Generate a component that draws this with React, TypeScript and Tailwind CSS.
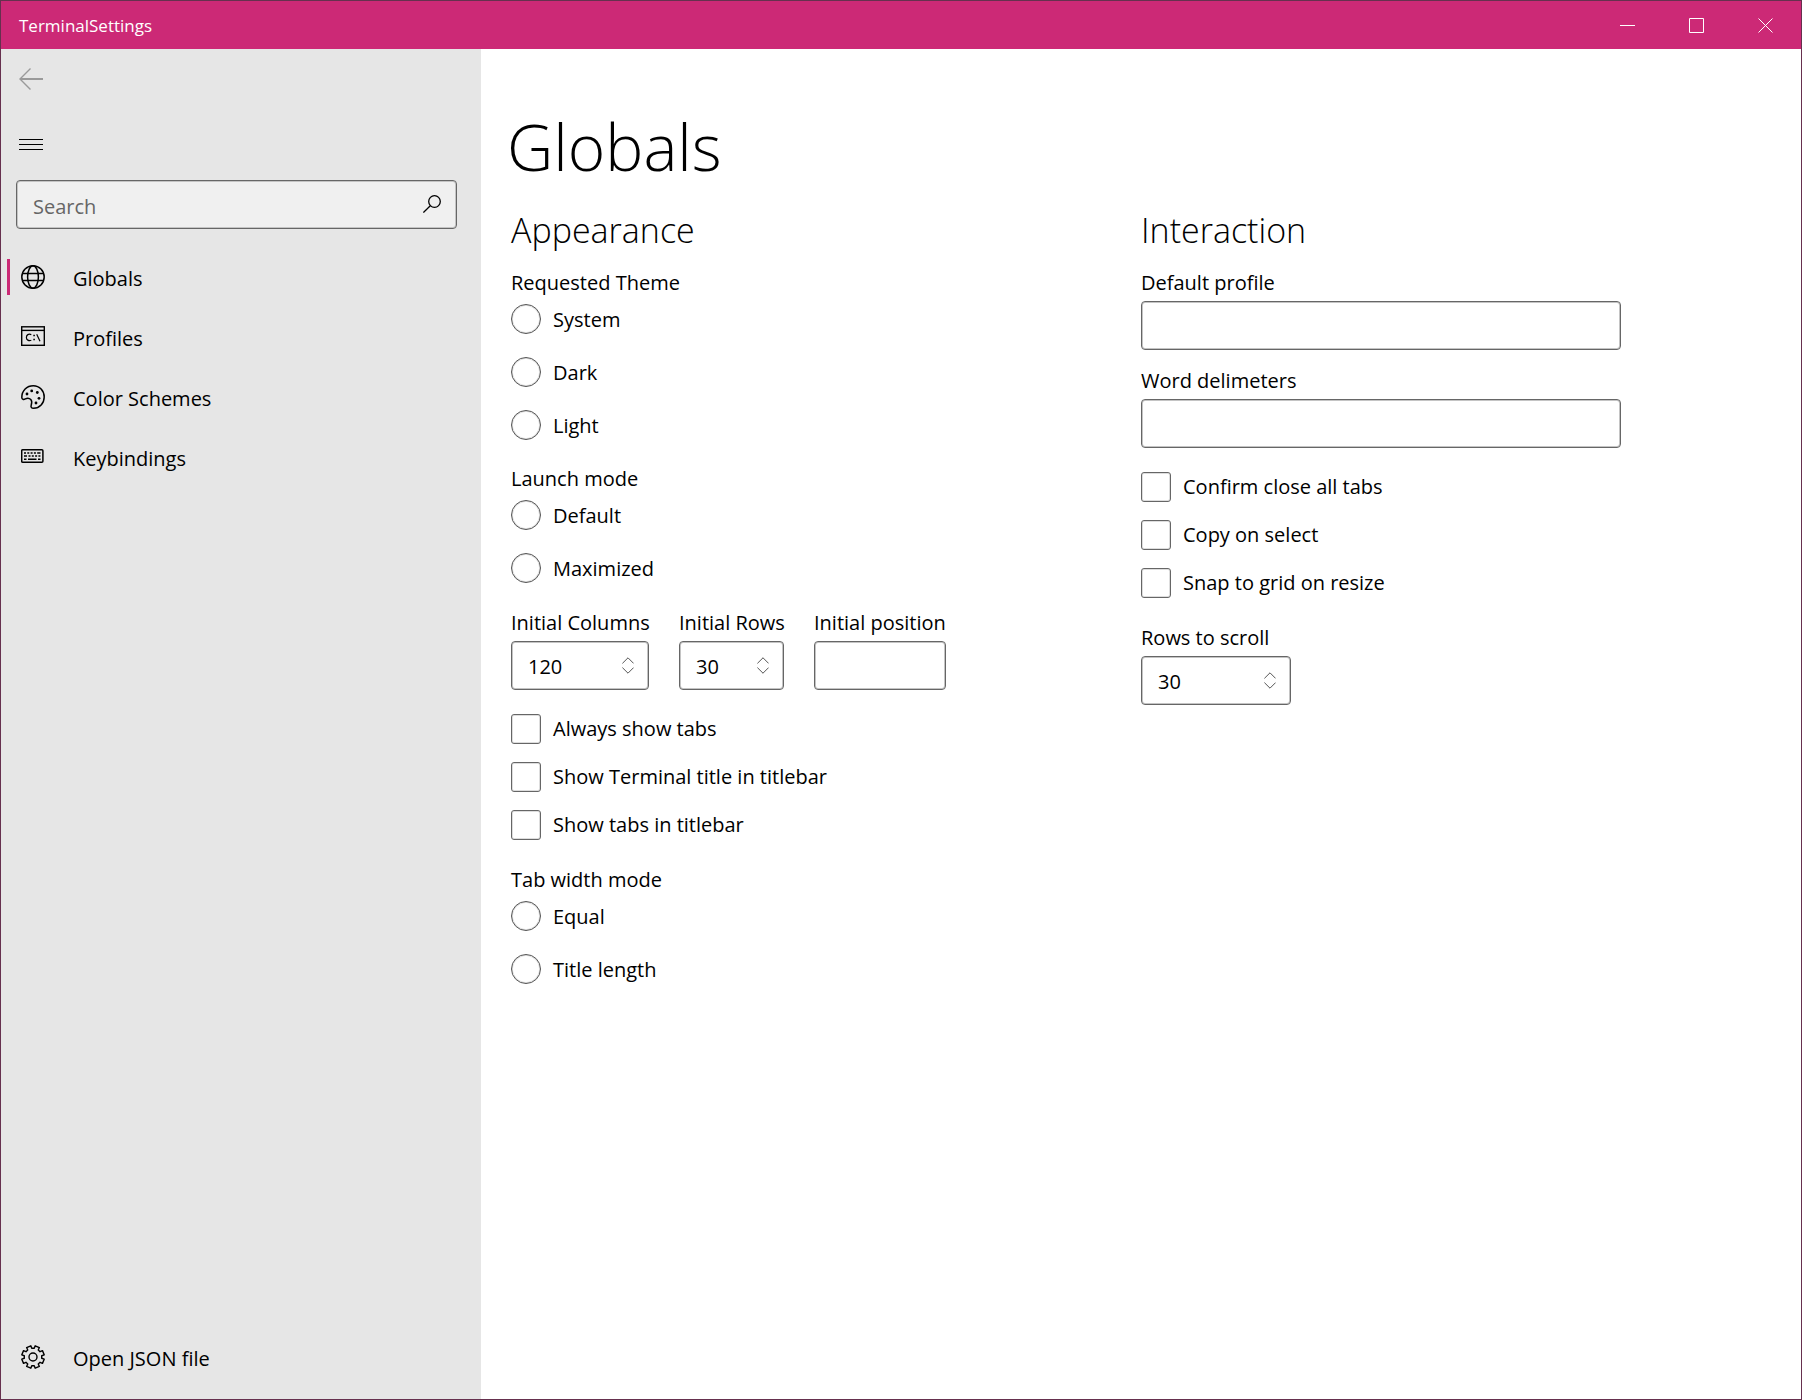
import type { ReactNode } from 'react'

function BackIcon() {
  return (
    <svg width="24" height="24" viewBox="0 0 24 24" fill="none" stroke="#9a9a9a">
      <path d="M1.5 12H24" strokeWidth="2" />
      <path d="M11.5 1.5L1 12L11.5 22.5" strokeWidth="1.4" />
    </svg>
  )
}

function MenuIcon() {
  return (
    <svg width="24" height="24" viewBox="0 0 24 24" stroke="#000" shapeRendering="crispEdges">
      <path d="M0 6.5H24M0 11.5H24M0 16.5H24" />
    </svg>
  )
}

function SearchIcon() {
  return (
    <svg width="18" height="20" viewBox="0 0 18 20" fill="none" stroke="#000" strokeWidth="1.3">
      <circle cx="11.5" cy="6.5" r="5.8" />
      <path d="M7.3 10.7L.4 17.6" />
    </svg>
  )
}

function GlobeIcon() {
  return (
    <svg width="24" height="24" viewBox="0 0 24 24" fill="none" stroke="#000" strokeWidth="1.5">
      <circle cx="12" cy="12" r="11.2" />
      <ellipse cx="12" cy="12" rx="5.4" ry="11.2" />
      <path d="M1.5 8.5H22.5M1.5 15.5H22.5" />
    </svg>
  )
}

function ConsoleIcon() {
  return (
    <svg width="24" height="24" viewBox="0 0 24 24" fill="none" stroke="#000">
      <rect x=".7" y="1.8" width="22.6" height="18.5" strokeWidth="1.4" />
      <path d="M0 5.4H24" strokeWidth="1.4" />
      <path d="M10.3 9.6C7.600 8.400 5.400 9.900 5.400 12.400S7.600 16.200 10.300 15.300M15.700 9.200L19 16.200" strokeWidth="1.200" />
      <path d="M12.300 10.500h1.600M12.300 14.500h1.600" strokeWidth="1.600" />
    </svg>
  )
}

function PaletteIcon() {
  return (
    <svg width="24" height="24" viewBox="0 0 24 24" fill="none" stroke="#000" strokeWidth="1.5">
      <path d="M.8 12.500C.8 5.500 5.800.8 12.300.8C18.600.8 23.200 5.800 23.200 12S18.600 23.200 12.600 23.200C10.300 23.200 9.600 21.900 10.200 20.200C10.900 18.100 11.300 16.200 9.800 14.600C8.200 12.900 6.200 12.900 4.400 13.900C2.600 14.900.8 14.400.8 12.500Z" />
      <g fill="#000" stroke="none">
        <circle cx="6" cy="9" r="1.400" />
        <circle cx="10.700" cy="5.900" r="1.400" />
        <circle cx="16.300" cy="7.500" r="1.400" />
        <circle cx="18" cy="13.300" r="1.400" />
        <circle cx="15" cy="18" r="1.400" />
      </g>
    </svg>
  )
}

function KeyboardIcon() {
  return (
    <svg width="24" height="24" viewBox="0 0 24 24" fill="none" stroke="#000">
      <rect x=".7" y="4.700" width="21.200" height="12.600" rx="1" strokeWidth="1.500" />
      <path d="M3 8h2M6.300 8h2M9.600 8h2M12.900 8h2M16.200 8h3.300M3 11h3M7.500 11h2M10.800 11h2M14.100 11h2M17.400 11h2M3 14.200h2.500M7 14.200h8.500M17 14.200h2.500" strokeWidth="1.600" />
    </svg>
  )
}

function gearPath() {
  const points: string[] = []
  const teeth = 8
  for (let i = 0; i < teeth; i++) {
    const mid = (i * 2 * Math.PI) / teeth + Math.PI / teeth
    const corners: [number, number][] = [
      [8.8, -0.25],
      [11.4, -0.2],
      [11.4, 0.2],
      [8.8, 0.25],
    ]
    for (const [radius, turn] of corners) {
      points.push(`${(12 + radius * Math.cos(mid + turn)).toFixed(2)} ${(12 + radius * Math.sin(mid + turn)).toFixed(2)}`)
    }
  }
  return `M${points.join('L')}Z`
}

function GearIcon() {
  return (
    <svg width="24" height="24" viewBox="0 0 24 24" fill="none" stroke="#000" strokeWidth="1.4" strokeLinejoin="round">
      <path d={gearPath()} />
      <circle cx="12" cy="12" r="4" />
    </svg>
  )
}

function Chevron({ up }: { up?: boolean }) {
  return (
    <svg width="12" height="7" viewBox="0 0 12 7" fill="none" stroke="#555">
      <path d={up ? 'M.4 6.400L6 .8L11.600 6.400' : 'M.4 .6L6 6.200L11.600 .6'} />
    </svg>
  )
}

function CaptionButton({ label, path }: { label: string; path: string }) {
  return (
    <button type="button" aria-label={label} className="flex w-[69px] items-center justify-center">
      <svg width="15" height="15" viewBox="0 0 15 15" fill="none" stroke="#fff">
        <path d={path} />
      </svg>
    </button>
  )
}

function NavItem({ icon, label, active }: { icon: ReactNode; label: string; active?: boolean }) {
  return (
    <a href="#" aria-current={active ? 'page' : undefined} className="flex h-[60px] items-center pl-1.5">
      <span className={active ? 'h-9 w-[3px] bg-[#cc2976]' : 'h-9 w-[3px]'} />
      <span className="ml-[11px] flex">{icon}</span>
      <span className="ml-7 pt-1">{label}</span>
    </a>
  )
}

function RadioGroup({ legend, name, options }: { legend: string; name: string; options: string[] }) {
  return (
    <fieldset>
      <legend className="mb-1.5">{legend}</legend>
      <div className="flex flex-col gap-[23px]">
        {options.map((option) => (
          <label key={option} className="flex items-center gap-3 leading-[28px]">
            <input
              type="radio"
              name={name}
              className="size-[30px] shrink-0 appearance-none rounded-full border border-[#555] bg-white shadow-[inset_0_0_0_1px_#ddd] checked:border-8 checked:border-[#cc2976]"
            />
            <span className="pt-0.5">{option}</span>
          </label>
        ))}
      </div>
    </fieldset>
  )
}

function CheckList({ options }: { options: string[] }) {
  return (
    <div className="flex flex-col gap-[18px] pb-px">
      {options.map((option) => (
        <label key={option} className="flex items-center gap-3 leading-[30px]">
          <input
            type="checkbox"
            className="size-[30px] shrink-0 appearance-none rounded-[3px] border border-[#666] bg-white shadow-[inset_0_0_0_1px_#ddd] checked:bg-[#cc2976]"
          />
          {option}
        </label>
      ))}
    </div>
  )
}

const box = 'h-[49px] rounded-[4px] border border-[#666] bg-white shadow-[inset_0_0_0_1px_#c4c4c4]'

function TextField({ id, label, width }: { id: string; label: string; width: string }) {
  return (
    <div className={`flex flex-col gap-[3px] ${width}`}>
      <label htmlFor={id} className="whitespace-nowrap">{label}</label>
      <input id={id} type="text" className={`w-full px-4 ${box}`} />
    </div>
  )
}

function NumberField({ id, label, value, width }: { id: string; label: string; value: number; width: string }) {
  return (
    <div className={`flex flex-col gap-[3px] ${width}`}>
      <label htmlFor={id} className="whitespace-nowrap">{label}</label>
      <div className={`flex items-center pr-3.5 pl-4 ${box}`}>
        <input
          id={id}
          type="number"
          defaultValue={value}
          className="w-full min-w-0 flex-1 [appearance:textfield] bg-transparent pt-0.5 outline-none [&::-webkit-inner-spin-button]:appearance-none"
        />
        <span className="flex flex-col gap-[3px]">
          <button type="button" aria-label={`Increase ${label}`}><Chevron up /></button>
          <button type="button" aria-label={`Decrease ${label}`}><Chevron /></button>
        </span>
      </div>
    </div>
  )
}

function SectionHeading({ children }: { children: ReactNode }) {
  return <h3 className="mb-[13px] text-[34px] leading-[50px] font-light">{children}</h3>
}

export default function App() {
  return (
    <div className="flex min-h-screen flex-col border border-[#66304e] bg-white font-['Open_Sans','Noto_Sans',sans-serif] text-[20px] leading-[30px] text-black">
      <header className="flex h-12 items-stretch justify-between bg-[#cc2976] pr-px text-white">
        <h1 className="flex items-center pt-0.5 pl-[18px] text-[17px]">TerminalSettings</h1>
        <div className="flex">
          <CaptionButton label="Minimize" path="M0 7.500H15" />
          <CaptionButton label="Maximize" path="M.5 .5H14.500V14.500H.5Z" />
          <CaptionButton label="Close" path="M.5 .5L14.500 14.500M14.500 .5L.5 14.500" />
        </div>
      </header>

      <div className="flex flex-1">
        <aside className="flex w-[480px] shrink-0 flex-col bg-[#e6e6e6] pb-3">
          <button type="button" aria-label="Back" className="flex h-[60px] w-[60px] items-center justify-center">
            <BackIcon />
          </button>
          <button type="button" aria-label="Toggle navigation" className="mt-1.5 flex h-[60px] w-[60px] items-center justify-center">
            <MenuIcon />
          </button>
          <div className="mt-[5px] mr-6 ml-[15px] flex h-[49px] items-center rounded-[4px] border border-[#666] bg-[#f0f0f0] pr-[15px] pl-4 shadow-[inset_0_0_0_1px_#c4c4c4]">
            <input
              type="search"
              aria-label="Search"
              placeholder="Search"
              className="min-w-0 flex-1 bg-transparent pt-1 outline-none placeholder:text-[#666]"
            />
            <button type="button" aria-label="Submit search"><SearchIcon /></button>
          </div>
          <nav className="mt-[18px] flex flex-1 flex-col">
            <NavItem icon={<GlobeIcon />} label="Globals" active />
            <NavItem icon={<ConsoleIcon />} label="Profiles" />
            <NavItem icon={<PaletteIcon />} label="Color Schemes" />
            <NavItem icon={<KeyboardIcon />} label="Keybindings" />
            <div className="mt-auto">
              <NavItem icon={<GearIcon />} label="Open JSON file" />
            </div>
          </nav>
        </aside>

        <main className="flex-1 px-[30px] pt-[53px]">
          <h2 className="-ml-1 text-[64px] leading-[90px] font-light">Globals</h2>
          <div className="mt-[13px] grid grid-cols-2">
            <section>
              <SectionHeading>Appearance</SectionHeading>
              <div className="flex flex-col gap-6">
                <RadioGroup legend="Requested Theme" name="theme" options={['System', 'Dark', 'Light']} />
                <RadioGroup legend="Launch mode" name="launch" options={['Default', 'Maximized']} />
                <div className="flex gap-[30px] pt-px">
                  <NumberField id="columns" label="Initial Columns" value={120} width="w-[138px]" />
                  <NumberField id="rows" label="Initial Rows" value={30} width="w-[105px]" />
                  <TextField id="position" label="Initial position" width="w-[132px]" />
                </div>
                <CheckList options={['Always show tabs', 'Show Terminal title in titlebar', 'Show tabs in titlebar']} />
                <RadioGroup legend="Tab width mode" name="tabwidth" options={['Equal', 'Title length']} />
              </div>
            </section>
            <section>
              <SectionHeading>Interaction</SectionHeading>
              <div className="flex flex-col gap-6">
                <div className="flex flex-col gap-4">
                  <TextField id="profile" label="Default profile" width="w-full max-w-[480px]" />
                  <TextField id="delimiters" label="Word delimeters" width="w-full max-w-[480px]" />
                </div>
                <CheckList options={['Confirm close all tabs', 'Copy on select', 'Snap to grid on resize']} />
                <NumberField id="scroll" label="Rows to scroll" value={30} width="w-[150px]" />
              </div>
            </section>
          </div>
        </main>
      </div>
    </div>
  )
}
